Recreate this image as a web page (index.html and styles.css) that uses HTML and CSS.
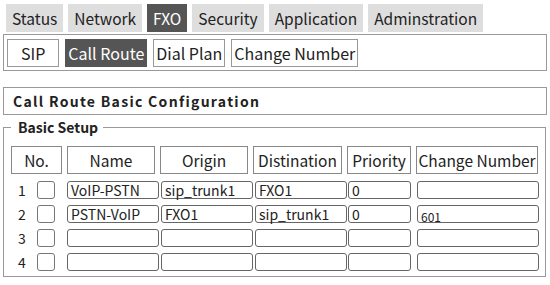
FILE: index.html
```html
<!DOCTYPE html>
<html>
<head>
<meta charset="utf-8">
<link rel="stylesheet" href="styles.css">
</head>
<body>
<div class="tabs">
  <div class="tab">Status</div>
  <div class="tab">Network</div>
  <div class="tab active">FXO</div>
  <div class="tab">Security</div>
  <div class="tab">Application</div>
  <div class="tab">Adminstration</div>
</div>
<div class="subbar">
  <div class="sub sip">SIP</div>
  <div class="sub active">Call Route</div>
  <div class="sub">Dial Plan</div>
  <div class="sub">Change Number</div>
</div>
<div class="title">Call Route Basic Configuration</div>
<fieldset class="setup">
  <legend>Basic Setup</legend>
  <div class="head">
    <div class="th">No.</div>
    <div class="th">Name</div>
    <div class="th">Origin</div>
    <div class="th">Distination</div>
    <div class="th">Priority</div>
    <div class="th">Change Number</div>
  </div>
  <div class="row">
    <div class="num">1</div><div class="chk"></div>
    <div class="inp w-name">VoIP-PSTN</div>
    <div class="inp w-origin">sip_trunk1</div>
    <div class="inp w-dest">FXO1</div>
    <div class="inp w-prio">0</div>
    <div class="inp w-chg"></div>
  </div>
  <div class="row">
    <div class="num">2</div><div class="chk"></div>
    <div class="inp w-name">PSTN-VoIP</div>
    <div class="inp w-origin">FXO1</div>
    <div class="inp w-dest">sip_trunk1</div>
    <div class="inp w-prio">0</div>
    <div class="inp w-chg low">601</div>
  </div>
  <div class="row">
    <div class="num">3</div><div class="chk"></div>
    <div class="inp w-name"></div>
    <div class="inp w-origin"></div>
    <div class="inp w-dest"></div>
    <div class="inp w-prio"></div>
    <div class="inp w-chg"></div>
  </div>
  <div class="row">
    <div class="num">4</div><div class="chk"></div>
    <div class="inp w-name"></div>
    <div class="inp w-origin"></div>
    <div class="inp w-dest"></div>
    <div class="inp w-prio"></div>
    <div class="inp w-chg"></div>
  </div>
</fieldset>
</body>
</html>
```
FILE: styles.css
```css
* { box-sizing: border-box; }
body {
  margin: 0;
  width: 550px;
  height: 285px;
  overflow: hidden;
  background: #fff;
  color: #222;
  font-family: "Noto Sans CJK JP", "Noto Sans", sans-serif;
}
.tabs {
  display: flex;
  gap: 5px;
  padding: 4px 0 0 6px;
}
.tab {
  height: 28px;
  line-height: 28px;
  font-size: 15.5px;
  padding: 0 6px;
  background: #dedede;
  color: #222;
}
.tab.active { background: #555; color: #fff; }
.subbar {
  margin: 2px 3px 0 3px;
  height: 37px;
  border: 1px solid #999;
  display: flex;
  gap: 6px;
  padding: 4px 3px;
}
.sub {
  height: 28px;
  line-height: 26px;
  font-size: 16px;
  padding: 0 2px;
  border: 1px solid #999;
  background: #fff;
}
.sub.sip { padding: 0 13px; }
.sub.active { background: #555; color: #fff; border-color: #555; }
.title {
  margin: 16px 3px 0 3px;
  height: 28px;
  border: 1px solid #999;
  font-weight: bold;
  font-size: 14px;
  letter-spacing: 1.3px;
  line-height: 26px;
  padding-left: 9px;
}
.setup {
  margin: 2px 4px 0 3px;
  border: 1px solid #999;
  padding: 0 0 5px 7px;
  min-width: 0;
}
.setup legend {
  font-weight: bold;
  font-size: 14px;
  line-height: 20px;
  padding: 0 5px 0 7px;
}
.head {
  display: grid;
  grid-template-columns: 51px 88px 88px 89px 64px 122px;
  column-gap: 5px;
  margin-top: 9px;
}
.th {
  height: 28px;
  border: 1px solid #888;
  text-align: center;
  font-size: 15.5px;
  line-height: 26px;
  white-space: nowrap;
}
.row {
  display: flex;
  align-items: center;
  margin-top: 6px;
  height: 18px;
}
.head + .row { margin-top: 7px; }
.num {
  width: 22px;
  text-align: center;
  font-size: 14px;
  line-height: 18px;
  margin-right: 4px;
}
.chk {
  width: 18px;
  height: 18px;
  border: 1px solid #777;
  border-radius: 3px;
  margin-right: 12px;
}
.inp {
  height: 18px;
  border: 1px solid #666;
  border-radius: 3px;
  font-size: 14px;
  line-height: 16px;
  padding-left: 3px;
  white-space: nowrap;
}
.w-name { width: 92px; margin-right: 2px; }
.w-origin { width: 92px; margin-right: 2px; }
.w-dest { width: 92px; margin-right: 1px; }
.w-prio { width: 63px; margin-right: 6px; }
.w-chg { width: 122px; }
.low { font-size: 12px; line-height: 18px; padding-top: 2px; }
```
